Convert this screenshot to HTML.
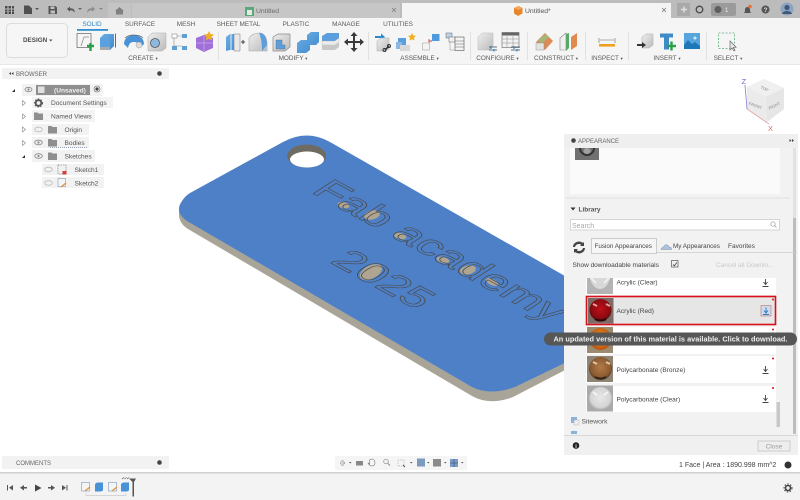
<!DOCTYPE html>
<html><head><meta charset="utf-8"><style>
html,body{margin:0;padding:0;background:#fff;width:800px;height:500px;overflow:hidden}
svg{display:block;font-family:"Liberation Sans",sans-serif;filter:blur(.35px)}
text{fill:#555;font-size:6.5px}
.t{font-size:6.4px;fill:#5a5a5a;text-anchor:middle}
.t tspan{font-size:4.5px}
.b{font-size:6.6px;fill:#555}
.p{font-size:6.55px;fill:#444}
</style></head><body>
<svg width="800" height="500" viewBox="0 0 800 500" xmlns="http://www.w3.org/2000/svg">
<defs>
<radialGradient id="red" cx=".5" cy=".45" r=".55"><stop offset="0" stop-color="#c01018"/><stop offset=".8" stop-color="#8a0a10"/><stop offset="1" stop-color="#40100f"/></radialGradient>
<radialGradient id="brz" cx=".5" cy=".45" r=".55"><stop offset="0" stop-color="#b47a48"/><stop offset=".8" stop-color="#8a5a30"/><stop offset="1" stop-color="#4a3420"/></radialGradient>
<radialGradient id="clr" cx=".5" cy=".45" r=".55"><stop offset="0" stop-color="#e8e8e8"/><stop offset=".8" stop-color="#d4d4d4"/><stop offset="1" stop-color="#aaa"/></radialGradient>
<radialGradient id="org" cx=".5" cy=".45" r=".55"><stop offset="0" stop-color="#e8a020"/><stop offset="1" stop-color="#c05010"/></radialGradient>
<linearGradient id="blue" x1="0" y1="0" x2="1" y2="1"><stop offset="0" stop-color="#6fb0e8"/><stop offset="1" stop-color="#3d88cc"/></linearGradient>
<linearGradient id="gray" x1="0" y1="0" x2="1" y2="1"><stop offset="0" stop-color="#eee"/><stop offset="1" stop-color="#bbb"/></linearGradient>
</defs>

<rect width="800" height="500" fill="#fff"/>

<!-- 3D MODEL -->
<path d="M179 208V216Q180 224 188 229L472 396Q490 406 513 397L600 352V330L179 208Z" fill="#a8a598"/>
<path d="M283 142Q307 129 330 142L600 296V346L515 387Q490 396 472 387L187 221Q174 212 182 201Q185 196 190 193Z" fill="#4e80c8"/>
<ellipse cx="306.700" cy="156" rx="19.500" ry="11.500" fill="#6e6b62"/>
<ellipse cx="307" cy="159.500" rx="17" ry="8" fill="#fff"/>

<ellipse cx="343.500" cy="205" rx="6" ry="3" fill="#b0a590" transform="rotate(15 343 205)"/>
<ellipse cx="372" cy="215" rx="8" ry="4.500" fill="#b0a590" transform="rotate(-12 372 215)"/>
<ellipse cx="400" cy="236" rx="6.500" ry="3" fill="#b0a590" transform="rotate(15 400 236)"/>
<ellipse cx="443" cy="260" rx="6.500" ry="3" fill="#b0a590" transform="rotate(15 443 260)"/>
<ellipse cx="468" cy="270" rx="8" ry="4.500" fill="#b0a590" transform="rotate(-12 468 270)"/>
<ellipse cx="492" cy="282" rx="6.500" ry="3" fill="#b0a590" transform="rotate(25 492 282)"/>
<ellipse cx="371" cy="272" rx="12" ry="6.500" fill="#b0a590" transform="rotate(-26 371 272)"/>
<text transform="matrix(1.98 1.08 -1.58 1.03 310 192)" style="font-size:20px;fill:none;stroke:#4a4a4a;stroke-width:.38">Fab academy</text>
<text transform="matrix(1.98 1.08 -1.58 1.03 329 262)" style="font-size:20px;fill:none;stroke:#4a4a4a;stroke-width:.38">2025</text>

<!-- TOP BAR -->
<rect width="800" height="18" fill="#bcbcbc"/>
<rect x="108" y="3" width="23" height="15" fill="#c4c4c4"/>
<rect x="132" y="3" width="268" height="15" fill="#c6c6c6"/>
<rect x="402" y="3" width="269" height="15" fill="#f4f4f4"/>
<rect x="677" y="3" width="13" height="13" fill="#a9a9a9"/>
<path d="M681 9.500h6M684 6.500v6" stroke="#e0e0e0" stroke-width="1.400"/>
<!-- grid -->
<g fill="#4a4a4a"><rect x="5" y="6" width="2.500" height="2.500"/><rect x="8.500" y="6" width="2.500" height="2.500"/><rect x="12" y="6" width="2" height="2.500"/><rect x="5" y="9.500" width="2.500" height="2"/><rect x="8.500" y="9.500" width="2.500" height="2"/><rect x="12" y="9.500" width="2" height="2"/><rect x="5" y="12" width="2.500" height="2"/><rect x="8.500" y="12" width="2.500" height="2"/><rect x="12" y="12" width="2" height="2"/></g>
<path d="M24 5.500h5l3 3v5.500h-8z" fill="#505050"/><path d="M35 8h4l-2 2z" fill="#555"/>
<path d="M48.500 6h7l1.500 1.500v6.500h-8.500z" fill="#555"/><rect x="50.500" y="6.500" width="4" height="2.500" fill="#c0c0c0"/><rect x="50.500" y="10.500" width="4.500" height="3" fill="#c0c0c0"/>
<path d="M67 9l3-2.500v1.800c4 0 5 2 4.500 4.500-1-2-2-2.500-4.500-2.500v1.500z" fill="#555"/><path d="M78 8h4l-2 2z" fill="#666"/>
<path d="M95 9l-3-2.500v1.800c-4 0-5 2-4.500 4.500 1-2 2-2.500 4.500-2.500v1.500z" fill="#8a8a8a"/><path d="M99 8h4l-2 2z" fill="#888"/>
<path d="M115 11l4.500-4 4.500 4h-1v3.500h-7V11z" fill="#808080"/>
<rect x="245" y="7" width="9" height="9" fill="#5aa878"/><rect x="247" y="10" width="5" height="5" fill="#e8e8e8"/>
<text x="256" y="13" style="font-size:6.800px;fill:#6a6a6a">Untitled</text>
<path d="M392 8l4 4M396 8l-4 4" stroke="#808080" stroke-width=".8"/>
<path d="M514 8l4.500-2 4 2v5.500l-4.500 2.500-4-2.500z" fill="#e8862c"/><path d="M514 8l4.500 2 4-2-4-2z" fill="#f2a860"/>
<text x="525" y="13" style="font-size:6.800px;fill:#555">Untitled*</text>
<path d="M662 8l4 4M666 8l-4 4" stroke="#777" stroke-width=".8"/>
<circle cx="699.500" cy="9.500" r="3.300" fill="none" stroke="#484848" stroke-width="1.300"/>
<rect x="711" y="3" width="25" height="13" rx="2" fill="#9b9b9b"/><circle cx="718" cy="9.500" r="3.500" fill="#5e5e5e"/><text x="725" y="12" style="font-size:6px;fill:#eee">1</text>
<path d="M744 13c1-1 1-2 1-3.500a2.500 2.500 0 0 1 5 0c0 1.500 0 2.500 1 3.500z" fill="#555"/><circle cx="750" cy="6.500" r="1.800" fill="#e8703c"/>
<circle cx="765.500" cy="9.500" r="4" fill="#555"/><text x="765.500" y="12" text-anchor="middle" style="font-size:6.500px;font-weight:bold;fill:#ddd">?</text>
<circle cx="787" cy="9" r="6.500" fill="#8da4c0"/><circle cx="787" cy="7.500" r="2.600" fill="#3f5878"/><path d="M782 14c1-4 9-4 10 0z" fill="#3f5878"/>

<!-- TOOLBAR -->
<rect y="18" width="800" height="46" fill="#f5f5f5"/>
<rect y="64" width="800" height="1" fill="#e8e8e8"/>
<rect x="6.500" y="23.500" width="61" height="34" rx="4" fill="#f6f6f6" stroke="#dcdcdc"/>
<text x="23" y="42" style="font-size:6.300px;font-weight:bold;fill:#4a4a4a">DESIGN</text><path d="M49 39.500h3.500l-1.750 2z" fill="#555"/>
<rect x="77" y="29" width="31" height="1.800" fill="#2f8fd0"/>
<g class="tabs">
<text class="t" x="92" y="26" style="fill:#2a86c6">SOLID</text>
<text class="t" x="140" y="26">SURFACE</text>
<text class="t" x="186" y="26">MESH</text>
<text class="t" x="238.500" y="26">SHEET METAL</text>
<text class="t" x="296" y="26">PLASTIC</text>
<text class="t" x="346" y="26">MANAGE</text>
<text class="t" x="398" y="26">UTILITIES</text>
</g>
<text class="t" x="143" y="60">CREATE <tspan>▾</tspan></text>
<text class="t" x="293" y="60">MODIFY <tspan>▾</tspan></text>
<text class="t" x="419.500" y="60">ASSEMBLE <tspan>▾</tspan></text>
<text class="t" x="497.500" y="60">CONFIGURE <tspan>▾</tspan></text>
<text class="t" x="556" y="60">CONSTRUCT <tspan>▾</tspan></text>
<text class="t" x="607" y="60">INSPECT <tspan>▾</tspan></text>
<text class="t" x="667" y="60">INSERT <tspan>▾</tspan></text>
<text class="t" x="728" y="60">SELECT <tspan>▾</tspan></text>
<g fill="#dcdcdc"><rect x="218" y="32" width=".8" height="28"/><rect x="368" y="32" width=".8" height="28"/><rect x="470" y="32" width=".8" height="28"/><rect x="527" y="32" width=".8" height="28"/><rect x="585" y="32" width=".8" height="28"/><rect x="628" y="32" width=".8" height="28"/><rect x="706" y="32" width=".8" height="28"/></g>

<!-- create icons -->
<rect x="77" y="33.500" width="14" height="14" fill="none" stroke="#666" stroke-width=".7"/><path d="M81 46l3-9h5" fill="none" stroke="#888" stroke-width=".7"/>
<path d="M87 46h7M90.500 43v8" stroke="#27a048" stroke-width="2.400"/>
<path d="M100 38l4-4h10v12l-4 4h-10z" fill="url(#blue)"/><path d="M100 38h10v12h-10z" fill="#5ba1e0"/><rect x="115" y="33.500" width="1" height="14" fill="#666"/><path d="M100 47v3h10v-3z" fill="#aaa"/>
<path d="M124 44c0-7 7-9 10-9s10 2 10 9l-4 4c-1-5-3-6-6-6s-5 1-6 6z" fill="#4a92d8"/><path d="M125 38c4-4 14-4 18 0" fill="none" stroke="#666" stroke-width=".8"/><ellipse cx="139" cy="45" rx="3" ry="3" fill="#ddd" stroke="#999" stroke-width=".5"/>
<path d="M148 37l4-4h14v15l-4 3h-14z" fill="url(#gray)" stroke="#aaa" stroke-width=".5"/><circle cx="155" cy="43" r="4.500" fill="#8db8e0" stroke="#555" stroke-width=".8"/>
<g fill="#5e9fd4"><rect x="172" y="34" width="5" height="4" fill="#fff" stroke="#777" stroke-width=".5"/><rect x="182" y="34" width="5" height="4"/><rect x="172" y="46" width="5" height="4"/><rect x="182" y="46" width="5" height="4"/></g><path d="M174 38v8h8M177 36h5" fill="none" stroke="#888" stroke-width=".6"/>
<path d="M196 38l8-3 9 3v10l-9 4-8-4z" fill="#a070d8"/><path d="M204 36v15M196 43l17 0" stroke="#c8a8e8" stroke-width=".7"/><path d="M209 31l1.500 3 3.500.500-2.500 2.500.500 3.500-3-1.700-3 1.700.500-3.500-2.500-2.500 3.500-.500z" fill="#f0b020"/>

<!-- modify -->
<path d="M226 37l4-3h10v16h-10l-4 1z" fill="url(#blue)"/><path d="M231 34v17" stroke="#eee"/><path d="M234 34h6v17h-6z" fill="#e8e8e8" stroke="#777" stroke-width=".5"/><path d="M241 42h4M243 40v4" stroke="#444"/>
<path d="M249 51V38q4-5 10-5h1c6 0 7 8 7 10v8z" fill="url(#gray)" stroke="#aaa" stroke-width=".6"/><path d="M259 33c6 0 8 6 8 12l-5 6c0-8-1-13-3-18z" fill="#5b9ede"/>
<path d="M273 37l5-3h12v13l-5 4h-12z" fill="url(#gray)" stroke="#888" stroke-width=".7"/><path d="M276 49v-9h6v5h3v4z" fill="#5b9ede" stroke="#666" stroke-width=".4"/>
<path d="M297 43l4-3h6v-5l4-3h8v10l-3 3h-6v5l-4 3h-9z" fill="url(#blue)"/>
<path d="M322 36l5-3h12v5l-4 3h-13z" fill="#5b9ede"/><path d="M322 41h13l4-3v4l-4 3h-13z" fill="#ececec" stroke="#aaa" stroke-width=".3"/><path d="M322 45h13l4-3v5l-4 3h-13z" fill="#c8c8c8"/>
<path d="M354 32l3.500 4h-2.500v5h5v-2.500l4 3.500-4 3.500V43h-5v5h2.500L354 52l-3.500-4h2.500v-5h-5v2.500l-4-3.500 4-3.500V41h5v-5h-2.500z" fill="#3a3a3a"/>

<!-- assemble -->
<path d="M375 36h6v-2.500l4 3.500-4 3.500V38h-6z" fill="#2a8ad0"/>
<path d="M377 41l4-3h8v11l-4 2h-8z" fill="url(#gray)" stroke="#aaa" stroke-width=".5"/><path d="M385 50l4-4" stroke="#333" stroke-width="1.500"/><circle cx="384.500" cy="50" r="1.500" fill="none" stroke="#333"/><circle cx="389" cy="46" r="1.500" fill="none" stroke="#333"/>
<path d="M398 38h8v7h-8z" fill="#5b9ede"/><path d="M396 42h6v7h-6z" fill="#8ab8e0"/><path d="M412 33l1.300 2.500 2.700.300-2 2 .500 2.700-2.500-1.300-2.500 1.300.500-2.700-2-2 2.700-.300z" fill="#f0b020"/><rect x="400" y="45" width="10" height="6" fill="#d8d8d8"/>
<path d="M429 39v10h-6.500" fill="none" stroke="#c04040" stroke-width=".8"/><rect x="422.500" y="43" width="7" height="7" fill="#f4f4f4" stroke="#999" stroke-width=".5"/><rect x="432" y="34" width="7.500" height="7" fill="#4e9ade"/><path d="M429 41h3" stroke="#c04040"/>
<rect x="446" y="33" width="6" height="5" fill="#b8d4ec" stroke="#666" stroke-width=".5"/><rect x="449" y="37" width="6" height="5" fill="#f0f0f0" stroke="#666" stroke-width=".5"/><rect x="455" y="37" width="9" height="13.500" fill="#f4f4f4" stroke="#555" stroke-width=".6"/><path d="M455 41h9M455 44h9M455 47h9" stroke="#666" stroke-width=".5"/><path d="M450 42v8h5" fill="none" stroke="#888" stroke-width=".5"/>

<!-- configure -->
<path d="M478 37l4-4h11v13l-4 4h-11z" fill="url(#gray)" stroke="#bbb" stroke-width=".5"/><path d="M489 47h8M489 50h8" stroke="#444" stroke-width=".7"/><path d="M491 46v3M494 49v2.500" stroke="#2a8ad0" stroke-width="1.200"/>
<rect x="502" y="32.500" width="17" height="15" fill="#f2f2f2" stroke="#666" stroke-width=".6"/><rect x="502" y="32.500" width="17" height="3" fill="#666"/><path d="M502 39h17M502 43h17M507 36v11M513 36v11" stroke="#888" stroke-width=".5"/><path d="M511 47h9M511 50h9" stroke="#444" stroke-width=".7"/><path d="M514 46v3M517 49v2.500" stroke="#2a8ad0" stroke-width="1.200"/>

<!-- construct -->
<path d="M536 42l9-9 8 8-8 9z" fill="#dc8a58"/><path d="M538 40l8-6 3 3-8 7z" fill="#a0b878"/><rect x="536" y="43" width="8" height="7" fill="#e2e2e2" stroke="#888" stroke-width=".4"/>
<path d="M560 38l6-5v17l-6 0z" fill="#f0f0f0" stroke="#888" stroke-width=".6"/><path d="M566 34l3-1v15l-3 3z" fill="#5aa868"/><path d="M571 37l6-4v13l-6 4z" fill="#e08a50"/>

<!-- inspect -->
<path d="M599 38v5M615 38v5M600 40h14" stroke="#666" stroke-width=".6" fill="none"/><rect x="599" y="44" width="16" height="2.600" fill="#f0a020"/>

<!-- insert -->
<path d="M642 37l4-3h7v11l-4 3h-7z" fill="url(#gray)" stroke="#aaa" stroke-width=".5"/><path d="M637 44h5v-2l4 3-4 3v-2h-5z" fill="#333"/>
<path d="M660 33.500h13v4h-4v12h-5v-12h-4z" fill="#3e8bc8"/><path d="M667 46h9M671.500 41.500v9" stroke="#27a048" stroke-width="2.400"/>
<rect x="684" y="33" width="16" height="16" fill="#58a5dd"/><circle cx="695" cy="38" r="1.500" fill="#d0e8f8"/><path d="M684 49v-4l4-5 4 4 3-2 5 4v3z" fill="#1c78b8"/>

<!-- select -->
<rect x="718.500" y="33" width="16" height="15.500" fill="none" stroke="#5bab78" stroke-width=".8" stroke-dasharray="2 1.500"/>
<path d="M730 41v9l2-2 2 3 1-.7-1.800-2.800 3-.2z" fill="#e8e8e8" stroke="#555" stroke-width=".6"/>

<!-- BROWSER -->
<rect x="2" y="68" width="167" height="11" fill="#f2f2f2"/>
<path d="M9 73.500l2-1.500v3zM11.500 73.500l2-1.500v3z" fill="#444"/>
<text x="16" y="76" style="font-size:6px;fill:#666">BROWSER</text>
<circle cx="159.500" cy="73.500" r="2.300" fill="#444"/>

<rect x="22" y="84" width="81" height="12" rx="1" fill="#f2f2f2"/>
<rect x="36" y="85" width="54" height="10" fill="#8f8f8f"/>
<path d="M12 92l3-3v3z" fill="#333"/>
<ellipse cx="28.500" cy="89.500" rx="3.500" ry="2.200" fill="none" stroke="#888" stroke-width=".8"/><circle cx="28.500" cy="89.500" r="1.100" fill="#888"/>
<rect x="38" y="86.500" width="6.500" height="6.500" fill="#e0e0e0"/>
<text x="54" y="92.500" style="font-size:6.600px;font-weight:bold;fill:#f0f0f0">(Unsaved)</text>
<circle cx="97" cy="89" r="3" fill="none" stroke="#666" stroke-width=".6"/><circle cx="97" cy="89" r="1.600" fill="#444"/>

<rect x="32" y="97" width="81" height="11" fill="#f4f4f4"/>
<path d="M22.500 100.500l3 2.500-3 2.500z" fill="#fff" stroke="#888" stroke-width=".6"/>
<circle cx="38.500" cy="103" r="2.800" fill="none" stroke="#555" stroke-width="1.800"/><circle cx="38.500" cy="103" r="4" fill="none" stroke="#555" stroke-width="1" stroke-dasharray="1.500 1.500"/>
<text class="b" x="51" y="105">Document Settings</text>

<rect x="32" y="110" width="63" height="12" fill="#f4f4f4"/>
<path d="M22.500 114l3 2.500-3 2.500z" fill="#fff" stroke="#888" stroke-width=".6"/>
<path d="M34 112.500h3.500l1 1h4.500v6.500h-9z" fill="#8f8f8f"/>
<text class="b" x="51" y="118.500">Named Views</text>

<rect x="32" y="124" width="57" height="11" fill="#f2f2f2"/>
<path d="M22.500 127l3 2.500-3 2.500z" fill="#fff" stroke="#888" stroke-width=".6"/>
<ellipse cx="38.500" cy="129.500" rx="3.800" ry="2.300" fill="none" stroke="#bbb" stroke-width=".8"/>
<path d="M48 126h3.500l1 1h4.500v6.500h-9z" fill="#8f8f8f"/>
<text class="b" x="64.500" y="132">Origin</text>

<rect x="32" y="137" width="57" height="11" fill="#f2f2f2"/>
<path d="M22.500 140.500l3 2.500-3 2.500z" fill="#fff" stroke="#888" stroke-width=".6"/>
<ellipse cx="38.500" cy="142.500" rx="3.800" ry="2.300" fill="none" stroke="#888" stroke-width=".8"/><circle cx="38.500" cy="142.500" r="1.100" fill="#888"/>
<path d="M48 139h3.500l1 1h4.500v6.500h-9z" fill="#8f8f8f"/>
<text class="b" x="64.500" y="145">Bodies</text>
<path d="M50 147.500h38" stroke="#7a8aa8" stroke-width=".8" stroke-dasharray="1 1"/>

<rect x="32" y="150" width="63" height="12" fill="#f2f2f2"/>
<path d="M22 158l3-3v3z" fill="#333"/>
<ellipse cx="38.500" cy="156" rx="3.800" ry="2.300" fill="none" stroke="#888" stroke-width=".8"/><circle cx="38.500" cy="156" r="1.100" fill="#888"/>
<path d="M48 152.500h3.500l1 1h4.500v6.500h-9z" fill="#8f8f8f"/>
<text class="b" x="64.500" y="158.500">Sketches</text>

<rect x="42" y="164" width="62" height="11" fill="#f2f2f2"/>
<ellipse cx="48.500" cy="169.500" rx="3.800" ry="2.300" fill="none" stroke="#bbb" stroke-width=".8"/>
<rect x="58" y="165" width="8" height="9" fill="none" stroke="#666" stroke-width=".6" stroke-dasharray="1.500 1"/><rect x="62.500" y="171" width="4" height="3.500" fill="#d04040"/>
<text class="b" x="74.500" y="172">Sketch1</text>

<rect x="42" y="177" width="62" height="11" fill="#f2f2f2"/>
<ellipse cx="48.500" cy="183" rx="3.800" ry="2.300" fill="none" stroke="#bbb" stroke-width=".8"/>
<rect x="58" y="178.500" width="7.500" height="8" fill="#f4f4f4" stroke="#7a9ac0" stroke-width=".6"/><path d="M61 187l5-4" stroke="#e89030" stroke-width="1.300"/>
<text class="b" x="74.500" y="185.500">Sketch2</text>

<!-- VIEW CUBE -->
<path d="M747 87l17-8 20 9v21l-17 13-20-13z" fill="#eaeaea"/>
<path d="M747 87l17-8 20 9-18 9z" fill="#f0f0f0"/>
<path d="M766 97l18-9v21l-17 13z" fill="#e6e6e6"/>
<path d="M747 87v22l20 13-1-25z" fill="#ebebeb"/>
<path d="M745 85l2 24" stroke="#8e88d8" stroke-width=".9"/><path d="M747 109l22 15" stroke="#e2a8a8" stroke-width=".9"/>
<text x="741.500" y="84" style="font-size:7.500px;fill:#6a64c8">Z</text>
<text x="768" y="131" style="font-size:7.500px;fill:#d07070">X</text>
<text x="764" y="90" text-anchor="middle" transform="rotate(25 764 90)" style="font-size:4px;fill:#888">TOP</text>
<text x="755" y="107" text-anchor="middle" transform="rotate(20 755 107)" style="font-size:4px;fill:#888">FRONT</text>
<text x="775" y="107" text-anchor="middle" transform="rotate(-25 775 107)" style="font-size:4px;fill:#888">RIGHT</text>

<!-- APPEARANCE PANEL -->
<rect x="564" y="134" width="234" height="321" fill="#f2f2f2"/>
<rect x="564" y="134" width="234" height="14" fill="#efefef"/>
<circle cx="573.500" cy="140.500" r="2.300" fill="#444"/>
<text x="578" y="143" style="font-size:6px;fill:#666">APPEARANCE</text>
<path d="M789.500 139l2 1.500-2 1.500zM792 139l2 1.500-2 1.500z" fill="#444"/>
<rect x="570" y="148" width="210" height="46" fill="#fafafa"/>
<rect x="575" y="148" width="24" height="12" fill="#707070"/>
<path d="M580 148a7 7 0 0 0 14 0" fill="none" stroke="#333" stroke-width="2"/><ellipse cx="587" cy="151" rx="3.500" ry="3" fill="#a0a0a0"/>
<rect x="793" y="148" width="3" height="286" fill="#bdbdbd"/><rect x="793" y="148" width="3" height="70" fill="#e2e2e2"/>
<rect x="566" y="197.500" width="224" height="1" fill="#e0e0e0"/>
<path d="M570.500 207.500h5l-2.500 3z" fill="#333"/>
<text x="578.500" y="211.500" style="font-size:6.500px;font-weight:bold;fill:#555">Library</text>
<rect x="570.500" y="219.500" width="209" height="10.500" fill="#fff" stroke="#ccc" stroke-width=".8"/>
<text x="572" y="228" style="font-size:7px;fill:#aaa">Search</text>
<circle cx="773" cy="224" r="2.200" fill="none" stroke="#999" stroke-width=".7"/><path d="M774.500 225.500l2 2" stroke="#999" stroke-width=".8"/>
<!-- sync -->
<path d="M573 247a6 5.500 0 0 1 10-4l1-1v4h-4l1.300-1.200a4 4 0 0 0-6.300 2.200zM585 248a6 5.500 0 0 1-10 4l-1 1v-4h4l-1.300 1.200a4 4 0 0 0 6.300-2.200z" fill="#444"/>
<rect x="591.500" y="238.500" width="65" height="15" fill="#f6f6f6" stroke="#bbb" stroke-width=".7"/>
<path d="M656 252.500h141" stroke="#ccc" stroke-width=".7"/>
<text class="p" x="594.500" y="248" style="font-size:6.300px">Fusion Appearances</text>
<path d="M661 249.500c0-2 2-2 2.500-2.500 1-3 4.500-3 5.500 0 2 0 3 1 2.500 2.500z" fill="#a8c4e0" stroke="#777" stroke-width=".4"/>
<text class="p" x="673" y="248" style="font-size:6.300px">My Appearances</text>
<text class="p" x="728" y="248">Favorites</text>
<text class="p" x="572.500" y="267" style="font-size:6.500px">Show downloadable materials</text>
<rect x="671.500" y="260.500" width="6.500" height="6.500" fill="#f0f0f0" stroke="#555" stroke-width=".7"/><path d="M673 264.500l1.300 1.300 2.500-3.300" fill="none" stroke="#333" stroke-width=".7"/>
<text x="716" y="267" style="font-size:6.500px;fill:#c8c8c8">Cancel all Downlo...</text>

<!-- rows -->
<rect x="586" y="278" width="190" height="17" fill="#fff"/>
<rect x="587" y="278" width="26" height="16" fill="#b4b4b4"/><path d="M590 278c2 8 6 11 10 11s8-3 10-11z" fill="#d8d8d8"/><path d="M591 278l5 5M609 278l-5 5" stroke="#f0f0f0" stroke-width="2"/>
<text class="p" x="616.500" y="284.500">Acrylic (Clear)</text>
<path d="M765.500 279v5M763.500 282l2 2.500 2-2.500M762.500 286.500h6" fill="none" stroke="#444" stroke-width=".9"/>

<rect x="586.500" y="296.500" width="189" height="28" fill="#e6e6e6" stroke="#d8101c" stroke-width="1.600"/>
<rect x="588" y="298" width="25.500" height="25.500" fill="#7c6c68"/><circle cx="600.500" cy="310" r="11" fill="url(#red)"/><path d="M593 304l4 2M606 304l4 2" stroke="#e8a0a0" stroke-width="2"/><path d="M595 319c3 2 8 2 11 0" stroke="#300808" stroke-width="2" fill="none"/>
<text class="p" x="616.500" y="313">Acrylic (Red)</text>
<rect x="761" y="305.500" width="10" height="10.500" fill="#cddcec" stroke="#c07070" stroke-width=".6"/>
<path d="M766 307.500v5M764 310.500l2 2.500 2-2.500M763 314.500h6" fill="none" stroke="#2a7ac0" stroke-width=".9"/>
<circle cx="773" cy="299.500" r="1" fill="#d01020"/>

<rect x="586" y="327" width="190" height="27" fill="#fff"/>
<rect x="587" y="327" width="26" height="26" fill="#9a8a70"/><circle cx="600.500" cy="339" r="11" fill="url(#org)"/>
<circle cx="773" cy="329.500" r="1" fill="#d01020"/>

<rect x="586" y="356" width="190" height="27" fill="#fff"/>
<rect x="587" y="356" width="26" height="26" fill="#8f8474"/><circle cx="600.500" cy="368.500" r="11.500" fill="url(#brz)"/><path d="M593 362l4 2M606 362l4 2" stroke="#e0c8a8" stroke-width="2"/><path d="M595 377c3 2 8 2 11 0" stroke="#3a2818" stroke-width="2" fill="none"/>
<text class="p" x="616.500" y="372">Polycarbonate (Bronze)</text>
<path d="M765.500 366v5M763.500 369l2 2.500 2-2.500M762.500 373.500h6" fill="none" stroke="#444" stroke-width=".9"/>
<circle cx="773" cy="358.500" r="1" fill="#d01020"/>

<rect x="586" y="386" width="190" height="26" fill="#fff"/>
<rect x="587" y="385.500" width="26" height="26" fill="#aaa"/><circle cx="600.500" cy="398.500" r="11.500" fill="url(#clr)"/><path d="M593 392l4 3M608 392l-4 3" stroke="#f4f4f4" stroke-width="2"/>
<text class="p" x="616.500" y="401.500">Polycarbonate (Clear)</text>
<path d="M765.500 395v5M763.500 398l2 2.500 2-2.500M762.500 402.500h6" fill="none" stroke="#444" stroke-width=".9"/>
<circle cx="773" cy="388" r="1" fill="#d01020"/>

<rect x="776.500" y="402" width="3.500" height="25" fill="#c8c8c8"/>
<rect x="571" y="417" width="6" height="6" fill="#8ab4dc"/><rect x="574" y="420" width="5" height="5" fill="#eee" stroke="#aaa" stroke-width=".4"/>
<text x="581.500" y="423.500" style="font-size:6.800px;fill:#555">Sitework</text>
<rect x="571" y="431" width="6" height="3" fill="#8ab4dc"/>
<rect x="564" y="435" width="234" height="1" fill="#d8d8d8"/>
<rect x="564" y="436" width="234" height="19" fill="#f0f0f0"/>
<circle cx="576" cy="445.500" r="3.300" fill="#222"/><text x="576" y="448" text-anchor="middle" style="font-size:5.500px;font-weight:bold;fill:#eee">i</text>
<rect x="758" y="441" width="32" height="10" fill="#eee" stroke="#c4c4c4" stroke-width=".8"/>
<text x="774" y="448.500" text-anchor="middle" style="font-size:6.500px;fill:#999">Close</text>

<!-- TOOLTIP -->
<rect x="544" y="332.500" width="253" height="13" rx="6.500" fill="#565656"/>
<text x="670.500" y="341.500" text-anchor="middle" style="font-size:7.380px;font-weight:bold;fill:#efefef">An updated version of this material is available. Click to download.</text>

<!-- STATUS -->
<text x="679" y="467" style="font-size:7px;fill:#444">1 Face | Area : 1890.998 mm^2</text>
<circle cx="788" cy="465" r="3.500" fill="#333"/>

<!-- NAV BAR -->
<rect x="335" y="456" width="132" height="14" fill="#f5f5f5"/>
<path d="M340 463l2.500-3 2.500 3-2.500 3zM345 463l-2.500 0" fill="#ddd" stroke="#888" stroke-width=".5"/>
<path d="M349 462h2.500l-1.250 1.500z" fill="#555"/>
<path d="M356 461h7v4.500h-7z" fill="#888"/>
<path d="M372 459c2 0 3 2 3 4 0 2-1.500 3-3 3s-3-1-4-3c1 0 1 .500 1.500 1v-4z" fill="#f4f4f4" stroke="#777" stroke-width=".6"/>
<circle cx="386" cy="461.500" r="2.300" fill="none" stroke="#888" stroke-width=".7"/><path d="M388 463.500l2 2" stroke="#666" stroke-width=".8"/>
<rect x="398" y="460" width="6" height="6" fill="none" stroke="#888" stroke-width=".5" stroke-dasharray="1 1"/><path d="M403 465l2 2" stroke="#555"/>
<path d="M410 462h2.500l-1.250 1.500z" fill="#555"/>
<rect x="417" y="458.500" width="8" height="8" fill="#7a9ac0"/>
<path d="M427 462h2.500l-1.250 1.500z" fill="#555"/>
<rect x="433" y="459" width="8" height="7.500" fill="#8a8a8a"/>
<path d="M444 462h2.500l-1.250 1.500z" fill="#555"/>
<rect x="450" y="459" width="8" height="8" fill="#7a9ac8"/><path d="M454 459v8M450 463h8" stroke="#345" stroke-width=".5"/>
<path d="M461 462h2.500l-1.250 1.500z" fill="#555"/>

<!-- COMMENTS -->
<rect x="2" y="456" width="167" height="13" fill="#f2f2f2"/>
<text x="16" y="465" style="font-size:6px;fill:#666">COMMENTS</text>
<circle cx="159.500" cy="462.500" r="2.300" fill="#444"/>

<!-- TIMELINE -->
<rect y="472" width="800" height="28" fill="#f3f3f3"/>
<rect y="472" width="800" height="1.500" fill="#cfcfcf"/>
<g fill="#555">
<rect x="7" y="485" width="1" height="5.500"/><path d="M13 485v5.500l-4-2.750z"/>
<path d="M20 487.750l4-2.750v5.500z"/><rect x="24" y="487" width="3" height="1.500"/>
<path d="M35 484.500l6.500 3.500-6.500 3.500z" fill="#444"/>
<rect x="48" y="487" width="3" height="1.500"/><path d="M55 487.750l-4-2.750v5.500z"/>
<path d="M62 485v5.500l4-2.750z"/><rect x="66.500" y="485" width="1" height="5.500"/>
</g>
<rect x="81.500" y="482.500" width="8" height="8.500" fill="#f4f4f4" stroke="#7a9ac0" stroke-width=".6"/><path d="M85 491l5-4" stroke="#e89030" stroke-width="1.200"/>
<path d="M95 484l2-1.500h6v8l-2 1h-6z" fill="#4a92d8"/>
<rect x="108.500" y="482.500" width="8" height="8.500" fill="#f4f4f4" stroke="#7a9ac0" stroke-width=".6"/><path d="M112 491l5-4" stroke="#e89030" stroke-width="1.200"/>
<path d="M121 484l2-1.500h6v8l-2 1h-6z" fill="#4a92d8"/>
<path d="M86 493v2.500h40V493" fill="none" stroke="#ccc" stroke-width=".7"/>
<path d="M122 479l2-1.500M124.500 479l2-1.500M127 479l2-1.500" stroke="#555" stroke-width=".7"/>
<path d="M129 478.500h7l-2 3.500v14.500h-1.500V482z" fill="#555"/>
<circle cx="788" cy="488" r="2.500" fill="none" stroke="#444" stroke-width="1.600"/><circle cx="788" cy="488" r="4" fill="none" stroke="#444" stroke-width="1" stroke-dasharray="1.500 1.500"/>
</svg>
</body></html>
